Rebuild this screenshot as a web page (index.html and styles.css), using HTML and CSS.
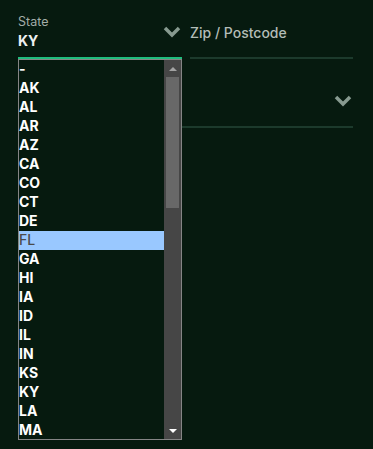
FILE: index.html
```html
<!DOCTYPE html>
<html lang="en">
<head>
    <meta charset="UTF-8">
    <meta name="viewport" content="width=device-width, initial-scale=1.0">
    <title>Address</title>
    <link rel="stylesheet" href="styles.css">
</head>
<body>
    <div class="form">
        <div class="row">
            <div class="field field-open">
                <div class="field-text">
                    <span class="field-label">State</span>
                    <span class="field-value">KY</span>
                </div>
                <svg class="chevron" width="18" height="12" viewBox="0 0 18 12">
                    <polyline points="2,2 9,9 16,2" fill="none" stroke="currentColor" stroke-width="3.5"/>
                </svg>

                <div class="listbox">
                    <ul class="options">
                        <li>-</li>
                        <li>AK</li>
                        <li>AL</li>
                        <li>AR</li>
                        <li>AZ</li>
                        <li>CA</li>
                        <li>CO</li>
                        <li>CT</li>
                        <li>DE</li>
                        <li class="active">FL</li>
                        <li>GA</li>
                        <li>HI</li>
                        <li>IA</li>
                        <li>ID</li>
                        <li>IL</li>
                        <li>IN</li>
                        <li>KS</li>
                        <li>KY</li>
                        <li>LA</li>
                        <li>MA</li>
                    </ul>
                    <div class="scrollbar">
                        <div class="scroll-btn"><span class="arrow-up"></span></div>
                        <div class="scroll-thumb"></div>
                        <div class="scroll-track"></div>
                        <div class="scroll-btn"><span class="arrow-down"></span></div>
                    </div>
                </div>
            </div>
            <div class="field field-zip">
                <span class="placeholder">Zip / Postcode</span>
            </div>
        </div>

        <div class="field field-country">
            <span></span>
            <svg class="chevron" width="18" height="12" viewBox="0 0 18 12">
                <polyline points="2,2 9,9 16,2" fill="none" stroke="currentColor" stroke-width="3.5"/>
            </svg>
        </div>
    </div>
</body>
</html>
```

FILE: styles.css
```css
html, body {
    height: 100%;
}
body {
    margin: 0;
    padding: 0;
    background-color: #061a0f;
    font-family: 'Inter', 'Roboto', sans-serif;
    color: #e8ece9;
}
.form {
    min-height: 449px;
    padding: 0 20px 0 18px;
}
.row {
    display: grid;
    grid-template-columns: 164px 1fr;
    gap: 8px;
}
.field {
    position: relative;
    display: flex;
    justify-content: space-between;
    align-items: flex-start;
    border-bottom: 2px solid #1c3a2c;
}
.field-open {
    height: 43px;
    padding-top: 14px;
    border-bottom-color: #1fbc7d;
    z-index: 2;
}
.field-text {
    display: flex;
    flex-direction: column;
}
.field-label {
    font-size: 12.5px;
    line-height: 15px;
    color: #a3ada7;
}
.field-value {
    margin-top: 3px;
    font-size: 14px;
    line-height: 18px;
    font-weight: 700;
    color: #eef1ef;
}
.chevron {
    color: #879a90;
    margin-top: 12px;
    margin-right: 1px;
}
.field-zip {
    height: 33px;
    padding-top: 24px;
}
.placeholder {
    font-size: 14px;
    line-height: 17px;
    font-weight: 500;
    color: #b3bdb7;
}
.field-country {
    height: 67px;
}
.field-country .chevron {
    margin-top: 36px;
}

/* open select popup */
.listbox {
    position: absolute;
    top: 59px;
    left: 0;
    width: 162px;
    height: 379px;
    border: 1px solid #858585;
    background-color: #061a0f;
    display: flex;
    overflow: hidden;
}
.options {
    flex: 1;
    list-style: none;
    margin: 0;
    padding: 0;
}
.options li {
    height: 19px;
    line-height: 18px;
    font-size: 14px;
    font-weight: 700;
    color: #ffffff;
}
.options li.active {
    background-color: #99c8ff;
    color: #4a4a4a;
    font-weight: 500;
}
.scrollbar {
    width: 17px;
    background-color: #464646;
    display: flex;
    flex-direction: column;
}
.scroll-btn {
    height: 17px;
    display: flex;
    align-items: center;
    justify-content: center;
}
.arrow-up {
    width: 0;
    height: 0;
    border-left: 4px solid transparent;
    border-right: 4px solid transparent;
    border-bottom: 4px solid #a3a3a3;
}
.arrow-down {
    width: 0;
    height: 0;
    border-left: 4px solid transparent;
    border-right: 4px solid transparent;
    border-top: 4px solid #ffffff;
}
.scroll-thumb {
    height: 131px;
    margin: 0 2px;
    background-color: #686868;
}
.scroll-track {
    flex: 1;
}
```
